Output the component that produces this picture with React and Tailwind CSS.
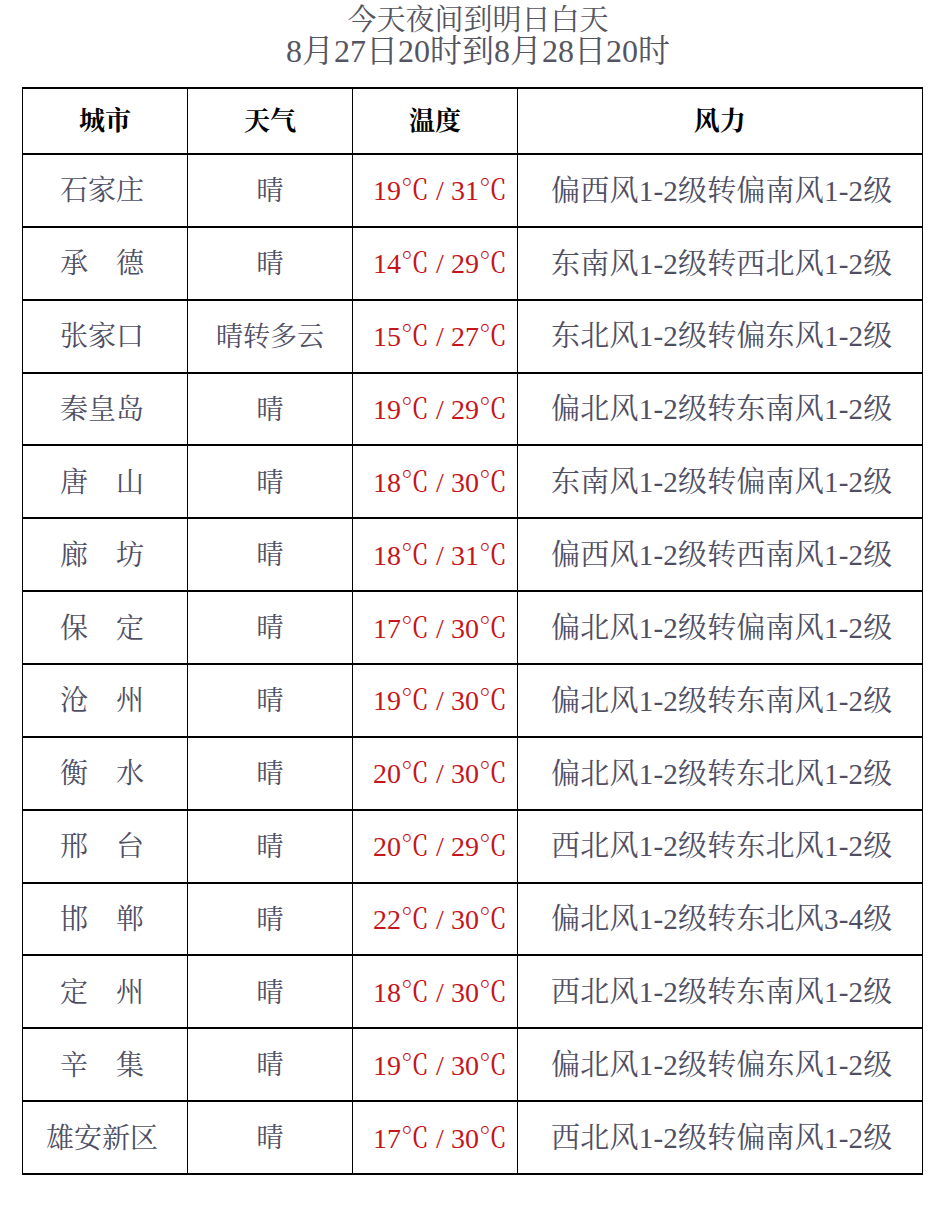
const rows = [
  ["石家庄", "晴", ["19", "31"], "偏西风1-2级转偏南风1-2级"],
  ["承　德", "晴", ["14", "29"], "东南风1-2级转西北风1-2级"],
  ["张家口", "晴转多云", ["15", "27"], "东北风1-2级转偏东风1-2级"],
  ["秦皇岛", "晴", ["19", "29"], "偏北风1-2级转东南风1-2级"],
  ["唐　山", "晴", ["18", "30"], "东南风1-2级转偏南风1-2级"],
  ["廊　坊", "晴", ["18", "31"], "偏西风1-2级转西南风1-2级"],
  ["保　定", "晴", ["17", "30"], "偏北风1-2级转偏南风1-2级"],
  ["沧　州", "晴", ["19", "30"], "偏北风1-2级转东南风1-2级"],
  ["衡　水", "晴", ["20", "30"], "偏北风1-2级转东北风1-2级"],
  ["邢　台", "晴", ["20", "29"], "西北风1-2级转东北风1-2级"],
  ["邯　郸", "晴", ["22", "30"], "偏北风1-2级转东北风3-4级"],
  ["定　州", "晴", ["18", "30"], "西北风1-2级转东南风1-2级"],
  ["辛　集", "晴", ["19", "30"], "偏北风1-2级转偏东风1-2级"],
  ["雄安新区", "晴", ["17", "30"], "西北风1-2级转偏南风1-2级"],
];

const font = {
  fontFamily: '"Liberation Serif", "Noto Serif CJK SC", "Noto Sans CJK SC", serif',
};

export default function App() {
  return (
    <div className="w-[942px] h-[1218px] bg-white" style={font}>
      <div className="pt-[6px] pl-[14px] text-center text-[#55555f]">
        <div className="text-[29px] leading-[29px]">今天夜间到明日白天</div>
        <div className="text-[32px] leading-[32px]">8月27日20时到8月28日20时</div>
      </div>
      <div className="ml-[22px] mt-[20px] w-[901px] border-l-[1.5px] border-t-[2px] border-black">
        <div className="grid grid-cols-[165px_165px_165px_404.5px] h-[66px]">
          {["城市", "天气", "温度", "风力"].map((h) => (
            <div
              key={h}
              className="flex items-center justify-center border-r-[1.5px] border-b-[2px] border-black text-[26px] font-bold text-black"
            >
              {h}
            </div>
          ))}
        </div>
        {rows.map((r, i) => (
          <div key={i} className="grid grid-cols-[165px_165px_165px_404.5px] h-[72.86px]">
            <div className="flex items-center justify-center pr-[6px] pt-[2px] border-r-[1.5px] border-b-[2px] border-black text-[28px] text-[#4f4f64] whitespace-nowrap">
              {r[0]}
            </div>
            <div className="flex items-center justify-center pt-[2px] border-r-[1.5px] border-b-[2px] border-black text-[27px] text-[#4f4f64] whitespace-nowrap">
              {r[1]}
            </div>
            <div className="flex items-center justify-center pl-[10px] pt-[2px] border-r-[1.5px] border-b-[2px] border-black text-[28px] text-[#c4161c] whitespace-nowrap">
              <span>{r[2][0]}℃</span>
              <span className="mx-[7px]">/</span>
              <span>{r[2][1]}℃</span>
            </div>
            <div className="flex items-center justify-center pl-[4px] pt-[2px] border-r-[1.5px] border-b-[2px] border-black text-[29px] tracking-[0.2px] text-[#4f4f64] whitespace-nowrap">
              {r[3]}
            </div>
          </div>
        ))}
      </div>
    </div>
  );
}
